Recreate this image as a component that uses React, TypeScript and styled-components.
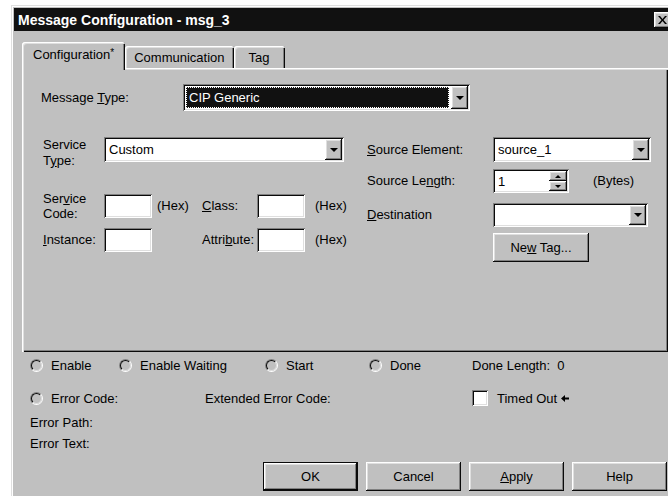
import React, { FC, ReactNode } from 'react';
import styled, { createGlobalStyle, css } from 'styled-components';

const face = '#c0c0c0';
const light = '#dfdfdf';
const shadow = '#808080';
const dark = '#0a0a0a';
const hi = '#ffffff';

const raised = css`
  box-shadow: inset -1px -1px ${dark}, inset 1px 1px ${hi},
    inset -2px -2px ${shadow}, inset 2px 2px ${light};
`;

const sunken = css`
  box-shadow: inset 1px 1px ${shadow}, inset -1px -1px ${hi},
    inset 2px 2px ${dark}, inset -2px -2px ${light};
`;

const GlobalStyle = createGlobalStyle`
  html, body {
    margin: 0;
    background: #fff;
    overflow: hidden;
  }
  body {
    font-family: "Liberation Sans", Arial, sans-serif;
    font-size: 13px;
    color: #000;
  }
  * { box-sizing: border-box; }
`;

const Window = styled.div`
  margin: 5px 0 0 11px;
  width: 672px;
  height: 500px;
  padding: 3px;
  background: ${face};
  box-shadow: inset 1px 1px ${light}, inset 2px 2px ${hi};
`;

const TitleBar = styled.div`
  height: 23px;
  display: flex;
  align-items: center;
  justify-content: space-between;
  padding-left: 4px;
  background: #111;
  color: #fff;
  font-weight: bold;
  font-size: 14px;
`;

const CloseButton = styled.div`
  width: 17px;
  height: 16px;
  margin-right: 9px;
  display: flex;
  align-items: center;
  justify-content: center;
  background: ${face};
  ${raised}
`;

const Body = styled.div`
  padding: 11px 0 0 8px;
`;

const TabStrip = styled.div`
  display: flex;
  align-items: flex-end;
  height: 26px;
`;

const Tab = styled.div<{ $active?: boolean; $pad?: number }>`
  position: relative;
  z-index: 1;
  display: flex;
  align-items: center;
  justify-content: center;
  padding: 0 ${(p) => p.$pad ?? 8}px;
  height: ${(p) => (p.$active ? 28 : 22)}px;
  margin-bottom: ${(p) => (p.$active ? -2 : 0)}px;
  padding-bottom: ${(p) => (p.$active ? 3 : 0)}px;
  background: ${face};
  border-radius: 3px 3px 0 0;
  box-shadow: inset 1px 1px ${hi}, inset 2px 2px ${light},
    inset -1px 0 ${dark}, inset -2px 0 ${shadow};
`;

const Sup = styled.span`
  font-size: 10px;
  vertical-align: 3px;
`;

const Panel = styled.div`
  width: 646px;
  height: 284px;
  background: ${face};
  box-shadow: inset 1px 1px ${hi}, inset 2px 2px ${light},
    inset -1px -1px ${dark}, inset -2px -2px ${shadow};
  padding: 16px 0 0 19px;
`;

const Row = styled.div<{ $gap?: number; $h?: number; $align?: string }>`
  display: flex;
  align-items: ${(p) => p.$align || 'center'};
  margin-top: ${(p) => p.$gap || 0}px;
  height: ${(p) => p.$h || 24}px;
`;

const Label = styled.div<{ $w?: number; $lh?: number; $pl?: number }>`
  width: ${(p) => (p.$w ? `${p.$w}px` : 'auto')};
  flex: none;
  padding-left: ${(p) => p.$pl || 0}px;
  line-height: ${(p) => p.$lh || 16}px;
  white-space: nowrap;
`;

const Columns = styled.div`
  display: flex;
  margin-top: 26px;
  padding-left: 2px;
`;

const LeftCol = styled.div`
  width: 324px;
`;

const RightCol = styled.div`
  display: flex;
  flex-direction: column;
`;

const Combo = styled.div<{ $w: number; $h?: number }>`
  width: ${(p) => p.$w}px;
  height: ${(p) => p.$h || 25}px;
  display: flex;
  padding: 2px;
  background: #fff;
  ${sunken}
`;

const Field = styled.div<{ $selected?: boolean }>`
  flex: 1;
  display: flex;
  align-items: center;
  padding-left: 3px;
  margin: ${(p) => (p.$selected ? '1px 2px 1px 1px' : 0)};
  background: ${(p) => (p.$selected ? '#111' : 'transparent')};
  color: ${(p) => (p.$selected ? '#fff' : '#000')};
  outline: ${(p) => (p.$selected ? '1px dotted #fff' : 'none')};
  outline-offset: -1px;
`;

const ArrowButton = styled.div`
  width: 17px;
  display: flex;
  align-items: center;
  justify-content: center;
  background: ${face};
  ${raised}
`;

const Tri = styled.div<{ $up?: boolean; $size?: number }>`
  width: 0;
  height: 0;
  border-left: ${(p) => p.$size || 4}px solid transparent;
  border-right: ${(p) => p.$size || 4}px solid transparent;
  ${(p) =>
    p.$up
      ? `border-bottom: ${p.$size || 4}px solid #000;`
      : `border-top: ${p.$size || 4}px solid #000;`}
`;

const TextBox = styled.div<{ $w: number }>`
  width: ${(p) => p.$w}px;
  height: 100%;
  flex: none;
  background: #fff;
  ${sunken}
`;

const Spinner = styled.div`
  width: 76px;
  height: 24px;
  display: flex;
  padding: 2px;
  background: #fff;
  ${sunken}
`;

const SpinButtons = styled.div`
  width: 18px;
  display: flex;
  flex-direction: column;
`;

const SpinButton = styled.div`
  flex: 1;
  display: flex;
  align-items: center;
  justify-content: center;
  background: ${face};
  ${raised}
`;

const PushButton = styled.div<{ $w?: number; $default?: boolean }>`
  width: ${(p) => p.$w || 95}px;
  height: 29px;
  flex: none;
  display: flex;
  align-items: center;
  justify-content: center;
  white-space: pre;
  background: ${face};
  ${(p) =>
    p.$default
      ? css`
          box-shadow: inset 0 0 0 1px ${dark}, inset -2px -2px ${dark},
            inset 2px 2px ${hi}, inset -3px -3px ${shadow},
            inset 3px 3px ${light};
        `
      : raised}
`;

const Status = styled.div`
  display: grid;
  grid-template-columns: 89px 86px 60px 104px 103px auto;
  grid-template-rows: 26px 40px 8px 34px;
  align-items: center;
  padding-left: 8px;
  white-space: nowrap;
`;

const Cell = styled.div<{ $col: string }>`
  grid-column: ${(p) => p.$col};
  display: flex;
  align-items: center;
`;

const RadioDot = styled.span`
  width: 13px;
  height: 13px;
  flex: none;
  margin-right: 8px;
  border-radius: 50%;
  border: 1px solid;
  border-color: ${shadow} ${hi} ${hi} ${shadow};
  background: ${face};
  &::after {
    content: '';
    display: block;
    width: 11px;
    height: 11px;
    border-radius: 50%;
    border: 1px solid;
    border-color: ${dark} ${light} ${light} ${dark};
    box-sizing: border-box;
  }
`;

const CheckBox = styled.span`
  width: 16px;
  height: 16px;
  flex: none;
  margin-right: 9px;
  background: #fff;
  ${sunken}
`;

const ButtonRow = styled.div`
  display: flex;
  gap: 8px;
  margin-top: 2px;
  padding-left: 241px;
`;

const Radio: FC<{ children: ReactNode }> = ({ children }) => (
  <>
    <RadioDot />
    <span>{children}</span>
  </>
);

const DropArrow: FC = () => (
  <ArrowButton>
    <Tri />
  </ArrowButton>
);

export default function App() {
  return (
    <>
      <GlobalStyle />
      <Window>
        <TitleBar>
          <span>Message Configuration - msg_3</span>
          <CloseButton>
            <svg width="9" height="8" viewBox="0 0 9 8">
              <path d="M0 0h2l2.5 3 2.5-3h2L5.5 4 9 8H7L4.5 5 2 8H0l3.5-4z" fill="#000" />
            </svg>
          </CloseButton>
        </TitleBar>
        <Body>
          <TabStrip>
            <Tab $active $pad={11}>
              <span>
                Configuration<Sup>*</Sup>
              </span>
            </Tab>
            <Tab $pad={9}>Communication</Tab>
            <Tab $pad={15}>Tag</Tab>
          </TabStrip>
          <Panel>
            <Row $h={27}>
              <Label $w={142}>
                Message <u>T</u>ype:
              </Label>
              <Combo $w={287} $h={27}>
                <Field $selected>CIP Generic</Field>
                <DropArrow />
              </Combo>
            </Row>

            <Columns>
              <LeftCol>
                <Row $h={25} $align="flex-start">
                  <Label $w={61}>
                    Service
                    <br />
                    T<u>y</u>pe:
                  </Label>
                  <Combo $w={240}>
                    <Field>Custom</Field>
                    <DropArrow />
                  </Combo>
                </Row>
                <Row $gap={32} $h={24}>
                  <Label $w={61} $lh={15}>
                    Ser<u>v</u>ice
                    <br />
                    Code:
                  </Label>
                  <TextBox $w={48} />
                  <Label $w={50} $pl={5}>
                    (Hex)
                  </Label>
                  <Label $w={55}>
                    <u>C</u>lass:
                  </Label>
                  <TextBox $w={48} />
                  <Label $pl={10}>(Hex)</Label>
                </Row>
                <Row $gap={10} $h={24}>
                  <Label $w={61}>
                    <u>I</u>nstance:
                  </Label>
                  <TextBox $w={48} />
                  <Label $w={50} />
                  <Label $w={55}>
                    Attri<u>b</u>ute:
                  </Label>
                  <TextBox $w={48} />
                  <Label $pl={10}>(Hex)</Label>
                </Row>
              </LeftCol>

              <RightCol>
                <Row $h={25}>
                  <Label $w={126}>
                    <u>S</u>ource Element:
                  </Label>
                  <Combo $w={158}>
                    <Field>source_1</Field>
                    <DropArrow />
                  </Combo>
                </Row>
                <Row $gap={7} $h={24}>
                  <Label $w={126}>
                    Source Le<u>n</u>gth:
                  </Label>
                  <Spinner>
                    <Field>1</Field>
                    <SpinButtons>
                      <SpinButton>
                        <Tri $up $size={3} />
                      </SpinButton>
                      <SpinButton>
                        <Tri $size={3} />
                      </SpinButton>
                    </SpinButtons>
                  </Spinner>
                  <Label $pl={24}>(Bytes)</Label>
                </Row>
                <Row $gap={10} $h={24}>
                  <Label $w={126}>
                    <u>D</u>estination
                  </Label>
                  <Combo $w={155} $h={24}>
                    <Field />
                    <DropArrow />
                  </Combo>
                </Row>
                <Row $gap={6} $h={29}>
                  <Label $w={126} />
                  <PushButton $w={96}>
                    <span>
                      Ne<u>w</u> Tag...
                    </span>
                  </PushButton>
                </Row>
              </RightCol>
            </Columns>
          </Panel>

          <Status>
            <Cell $col="1">
              <Radio>Enable</Radio>
            </Cell>
            <Cell $col="2 / 4">
              <Radio>Enable Waiting</Radio>
            </Cell>
            <Cell $col="4">
              <Radio>Start</Radio>
            </Cell>
            <Cell $col="5">
              <Radio>Done</Radio>
            </Cell>
            <Cell $col="6">Done Length:&nbsp; 0</Cell>

            <Cell $col="1 / 3">
              <Radio>Error Code:</Radio>
            </Cell>
            <Cell $col="3 / 6">Extended Error Code:</Cell>
            <Cell $col="6">
              <CheckBox />
              <span>Timed Out&nbsp;</span>
              <svg width="8" height="7" viewBox="0 0 8 7">
                <path d="M0 3.5L4 0v2.5h4v2H4V7z" fill="#000" />
              </svg>
            </Cell>

            <Cell $col="1 / 3">Error Path:</Cell>
            <Cell $col="1 / 3">Error Text:</Cell>
          </Status>

          <ButtonRow>
            <PushButton $default>OK</PushButton>
            <PushButton>Cancel</PushButton>
            <PushButton>
              <span>
                <u>A</u>pply
              </span>
            </PushButton>
            <PushButton>Help</PushButton>
          </ButtonRow>
        </Body>
      </Window>
    </>
  );
}
